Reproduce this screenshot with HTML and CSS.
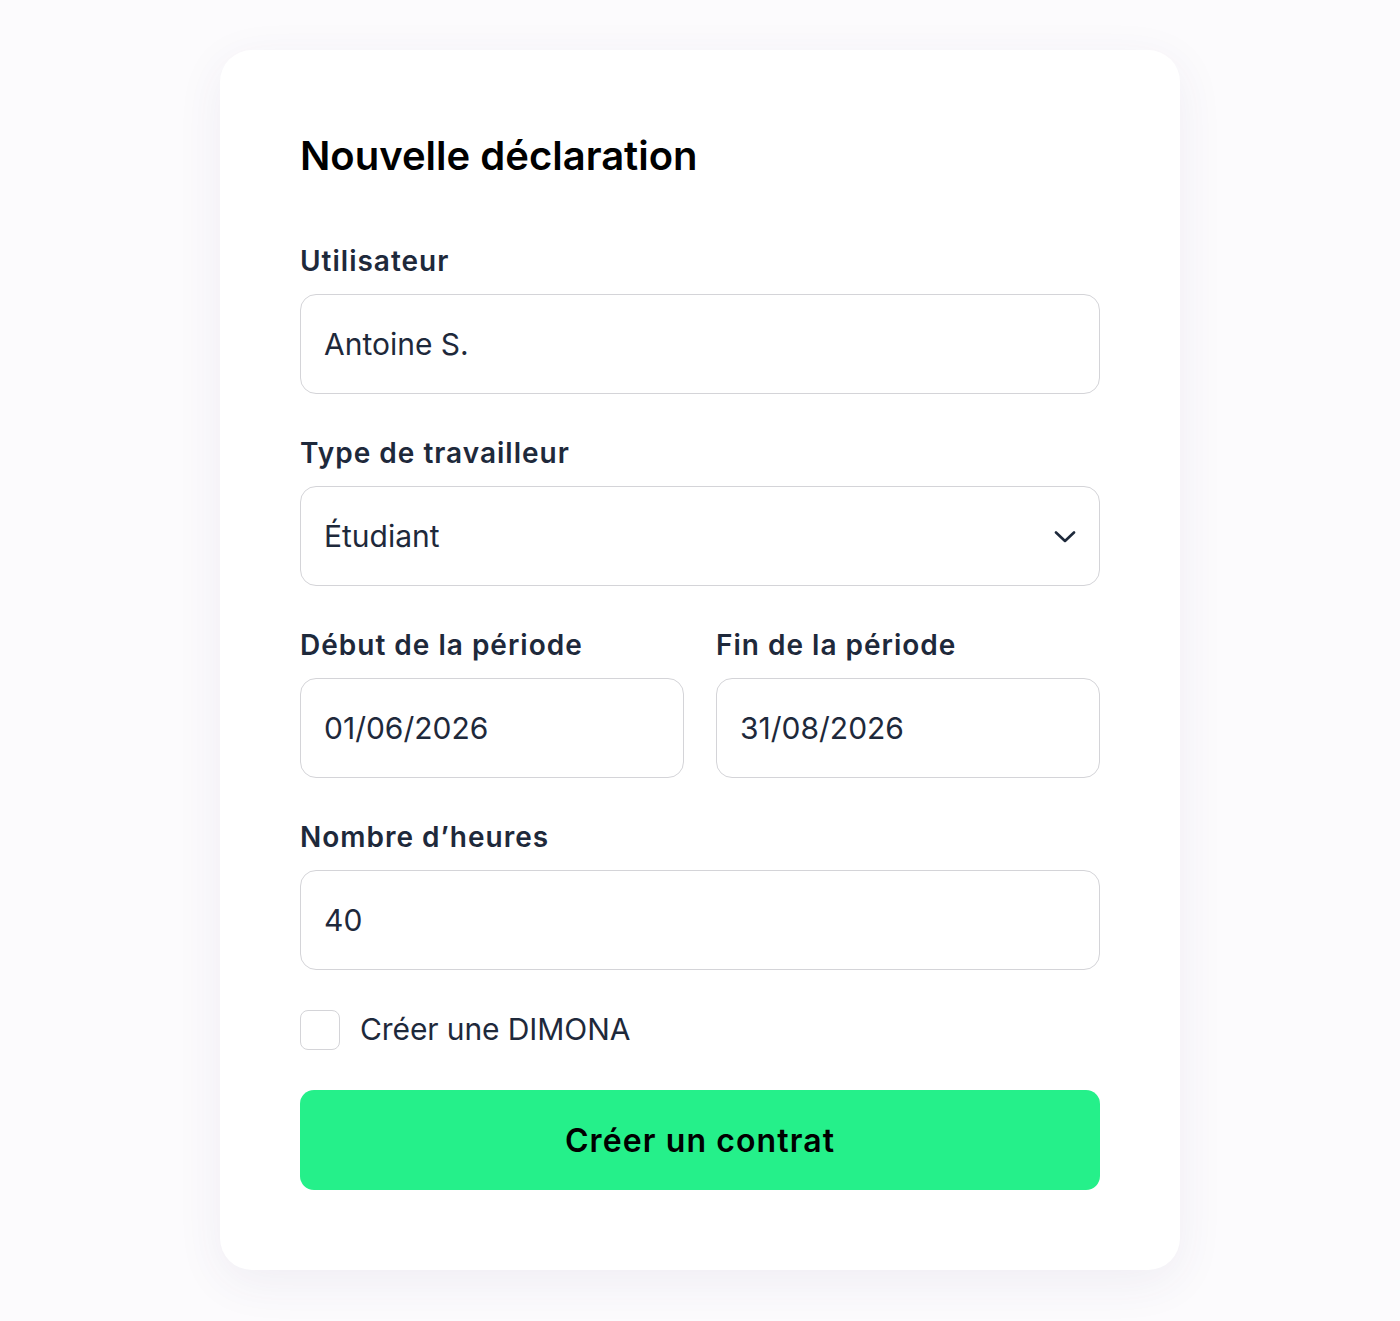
FILE: index.html
```html
<!DOCTYPE html>
<html lang="fr">
  <head>
    <meta charset="utf-8">
    <title>Nouvelle déclaration</title>
    <link rel="stylesheet" href="styles.css">
  </head>
  <body>
    <form class="card">
        <h1 class="title">Nouvelle déclaration</h1>

        <div class="field">
            <label class="label" for="user">Utilisateur</label>
            <input class="input" id="user" type="text" value="Antoine S.">
        </div>

        <div class="field">
            <label class="label" for="type">Type de travailleur</label>
            <div class="select-wrap">
                <select class="input select" id="type">
                    <option>Étudiant</option>
                    <option>Employé</option>
                    <option>Ouvrier</option>
                </select>
                <svg class="chevron" width="22" height="12" viewBox="0 0 22 12" fill="none">
                    <path d="M2 1.5 L11 10 L20 1.5" stroke="#1e293b" stroke-width="2.6" stroke-linecap="round" stroke-linejoin="round"/>
                </svg>
            </div>
        </div>

        <div class="row">
            <div class="field">
                <label class="label" for="start">Début de la période</label>
                <input class="input" id="start" type="text" value="01/06/2026">
            </div>
            <div class="field">
                <label class="label" for="end">Fin de la période</label>
                <input class="input" id="end" type="text" value="31/08/2026">
            </div>
        </div>

        <div class="field">
            <label class="label" for="hours">Nombre d’heures</label>
            <input class="input" id="hours" type="text" value="40">
        </div>

        <label class="check">
            <input class="checkbox" type="checkbox">
            <span>Créer une DIMONA</span>
        </label>

        <button class="submit" type="button">Créer un contrat</button>
    </form>
  </body>
</html>
```

FILE: styles.css
```css
*{
    margin: 0;
    padding: 0;
    box-sizing: border-box;
}
body{
    background: #fcfbfd;
    font-family: Inter, "Noto Sans", sans-serif;
    color: #1e293b;
    padding: 50px 0 51px;
}
.card{
    width: 960px;
    margin: 0 auto;
    background: #fff;
    border-radius: 32px;
    padding: 82px 80px 80px;
    box-shadow: 0 12px 48px rgba(70, 50, 110, 0.07);
    display: flex;
    flex-direction: column;
}
.title{
    font-size: 40px;
    line-height: 48px;
    font-weight: 600;
    color: #000;
    margin-bottom: 64px;
}
.field{
    display: flex;
    flex-direction: column;
    margin-bottom: 42px;
}
.row{
    display: grid;
    grid-template-columns: 1fr 1fr;
    gap: 32px;
}
.label{
    font-size: 28px;
    line-height: 34px;
    font-weight: 600;
    letter-spacing: 1px;
    color: #1e293b;
    margin-bottom: 16px;
}
.input{
    height: 100px;
    width: 100%;
    border: 1px solid #d4d4d8;
    border-radius: 16px;
    padding: 0 23px;
    font-family: inherit;
    font-size: 30px;
    color: #1e293b;
    background: #fff;
    outline: none;
}
.select-wrap{
    position: relative;
}
.select{
    appearance: none;
    -webkit-appearance: none;
    padding-right: 60px;
}
.chevron{
    position: absolute;
    right: 24px;
    top: 50%;
    margin-top: -5px;
    pointer-events: none;
}
.check{
    display: flex;
    align-items: center;
    gap: 20px;
    font-size: 30px;
    line-height: 40px;
    letter-spacing: -0.1px;
    color: #1e293b;
    margin-top: -2px;
    margin-bottom: 40px;
}
.check span{
    margin-top: -2px;
}
.checkbox{
    appearance: none;
    -webkit-appearance: none;
    width: 40px;
    height: 40px;
    border: 1px solid #d4d4d8;
    border-radius: 8px;
    background: #fff;
    flex-shrink: 0;
}
.submit{
    height: 100px;
    border: none;
    border-radius: 14px;
    background: #25f08a;
    color: #000;
    font-family: inherit;
    font-size: 32px;
    font-weight: 600;
    letter-spacing: 1.1px;
}
```
